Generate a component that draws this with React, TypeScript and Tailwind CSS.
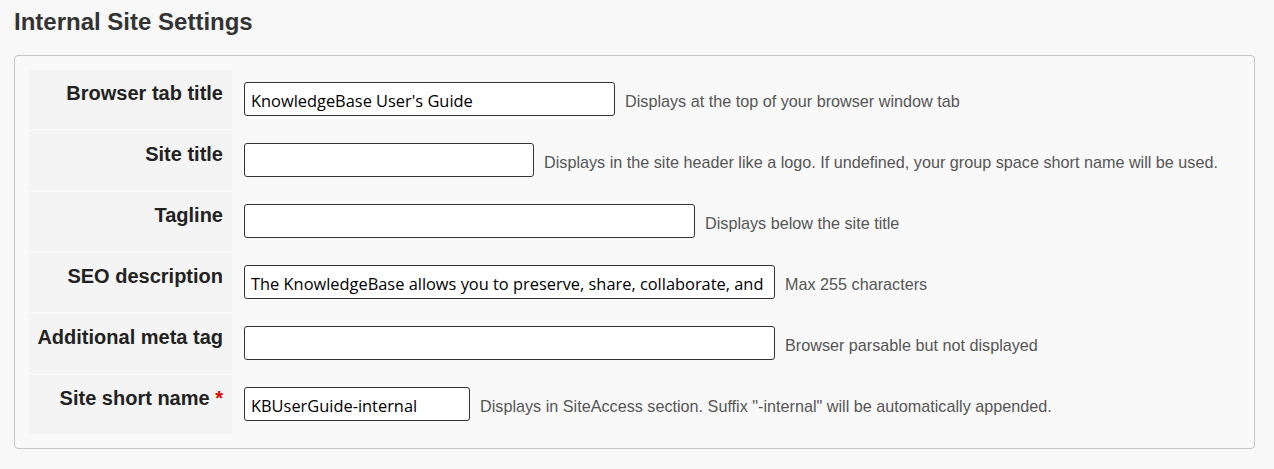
import React from "react";

const rows = [
  { label: "Browser tab title", value: "KnowledgeBase User's Guide", w: "w-[371px]", desc: "Displays at the top of your browser window tab" },
  { label: "Site title", value: "", w: "w-[290px]", desc: "Displays in the site header like a logo. If undefined, your group space short name will be used." },
  { label: "Tagline", value: "", w: "w-[451px]", desc: "Displays below the site title" },
  { label: "SEO description", value: "The KnowledgeBase allows you to preserve, share, collaborate, and", w: "w-[531px]", desc: "Max 255 characters" },
  { label: "Additional meta tag", value: "", w: "w-[531px]", desc: "Browser parsable but not displayed" },
  { label: "Site short name", value: "KBUserGuide-internal", w: "w-[226px]", desc: "Displays in SiteAccess section. Suffix \"-internal\" will be automatically appended.", required: true },
];

export default function App() {
  return (
    <div className="min-h-screen bg-[#f8f8f8] pl-[14px] pt-[9px] font-['Liberation_Sans',Arial,sans-serif]">
      <h2 className="text-[24px] font-bold leading-[1.1] text-[#333]">Internal Site Settings</h2>
      <div className="mt-[20px] w-[1241px] rounded-[4px] border border-[#c4c4c4] bg-[#f9f9f9] p-[12px]">
        <table className="border-separate border-spacing-[2px]">
          <tbody>
            {rows.map((r) => (
              <tr key={r.label}>
                <th className="h-[59px] w-[203px] bg-[#f4f4f4] pr-[9px] pt-[9px] text-right align-top text-[20px] font-bold leading-[1.43] text-[#222]">
                  {r.label}
                  {r.required && <span className="text-[#e00000]"> *</span>}
                </th>
                <td className="pl-[10px] pt-[12px] align-top">
                  <div className="flex items-start gap-[10px]">
                    <input
                      type="text"
                      defaultValue={r.value}
                      className={`${r.w} h-[34px] rounded-[3px] border border-[#333] bg-white px-[6px] pt-[2px] font-['Open_Sans',sans-serif] text-[16.4px] text-black outline-none`}
                    />
                    <span className="mt-[6.5px] whitespace-nowrap text-[16.2px] leading-[24px] text-[#555]">{r.desc}</span>
                  </div>
                </td>
              </tr>
            ))}
          </tbody>
        </table>
      </div>
    </div>
  );
}
